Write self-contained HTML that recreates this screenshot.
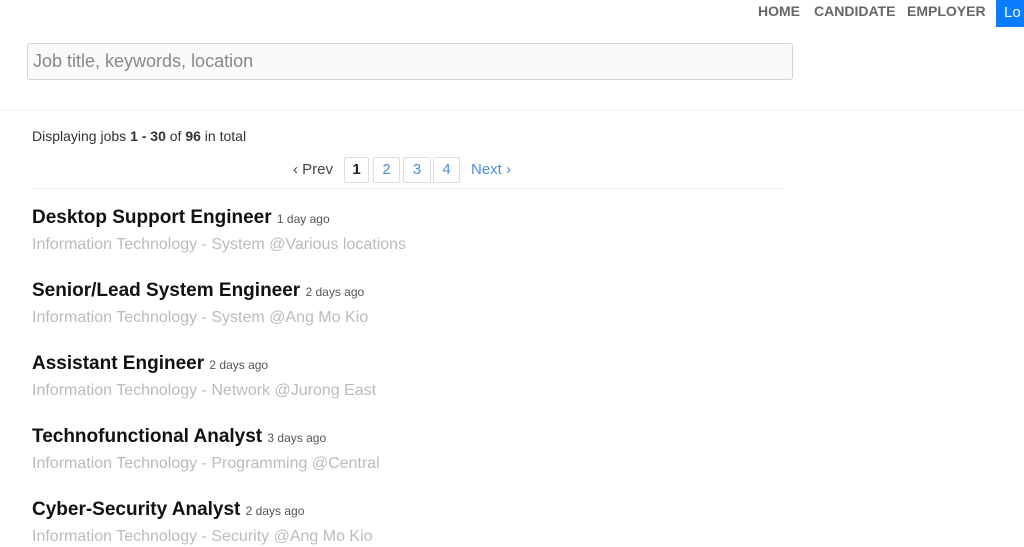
<!DOCTYPE html>
<html><head><style>
body{margin:0;width:1024px;height:547px;overflow:hidden;background:#fff;font-family:"Liberation Sans",sans-serif;position:relative}
.a{position:absolute;white-space:nowrap}
.nav{top:3px;font-size:14px;font-weight:bold;color:#666}
.btn{left:996px;top:0;width:40px;height:27px;background:#0a7cff;color:#fff;font-size:15px;line-height:25px;padding-left:8px}
.search{left:27px;top:43px;width:759px;height:35px;border:1px solid #d4d4d4;border-radius:3px;background:#fafafa;font-size:18px;color:#888;line-height:35px;padding-left:5px;box-sizing:content-box}
.pg{top:157px;height:24px;border:1px solid #ddd;border-radius:2px;text-align:center;line-height:24px;font-size:15px;color:#4a8fd6}
.t{font-size:19px;font-weight:bold;color:#111}
.t span{font-size:12px;font-weight:normal;color:#555}
.s{font-size:16px;color:#bbb}
</style></head><body>
<div class="a nav" style="left:758px">HOME</div>
<div class="a nav" style="left:814px">CANDIDATE</div>
<div class="a nav" style="left:907px">EMPLOYER</div>
<div class="a btn">Lo</div>
<div class="a search">Job title, keywords, location</div>
<div class="a" style="left:0;top:110px;width:1024px;height:1px;background:#f0f0f0"></div>
<div class="a" style="left:32px;top:128px;font-size:14px;color:#333">Displaying jobs <b>1 - 30</b> of <b>96</b> in total</div>
<div class="a" style="left:293px;top:161px;font-size:15px;color:#444">‹ Prev</div>
<div class="a pg" style="left:344px;width:23px;color:#222;font-weight:bold">1</div>
<div class="a pg" style="left:373px;width:25px">2</div>
<div class="a pg" style="left:403px;width:26px">3</div>
<div class="a pg" style="left:433px;width:25px">4</div>
<div class="a" style="left:471px;top:161px;font-size:15px;color:#4a8fd6">Next ›</div>
<div class="a" style="left:32px;top:188px;width:750px;height:1px;background:#eee"></div>

<div class="a t" style="left:32px;top:207px">Desktop Support Engineer <span>1 day ago</span></div>
<div class="a s" style="left:32px;top:236px">Information Technology - System @Various locations</div>
<div class="a t" style="left:32px;top:280px">Senior/Lead System Engineer <span>2 days ago</span></div>
<div class="a s" style="left:32px;top:309px">Information Technology - System @Ang Mo Kio</div>
<div class="a t" style="left:32px;top:353px">Assistant Engineer <span>2 days ago</span></div>
<div class="a s" style="left:32px;top:382px">Information Technology - Network @Jurong East</div>
<div class="a t" style="left:32px;top:426px">Technofunctional Analyst <span>3 days ago</span></div>
<div class="a s" style="left:32px;top:455px">Information Technology - Programming @Central</div>
<div class="a t" style="left:32px;top:499px">Cyber-Security Analyst <span>2 days ago</span></div>
<div class="a s" style="left:32px;top:528px">Information Technology - Security @Ang Mo Kio</div>
</body></html>
